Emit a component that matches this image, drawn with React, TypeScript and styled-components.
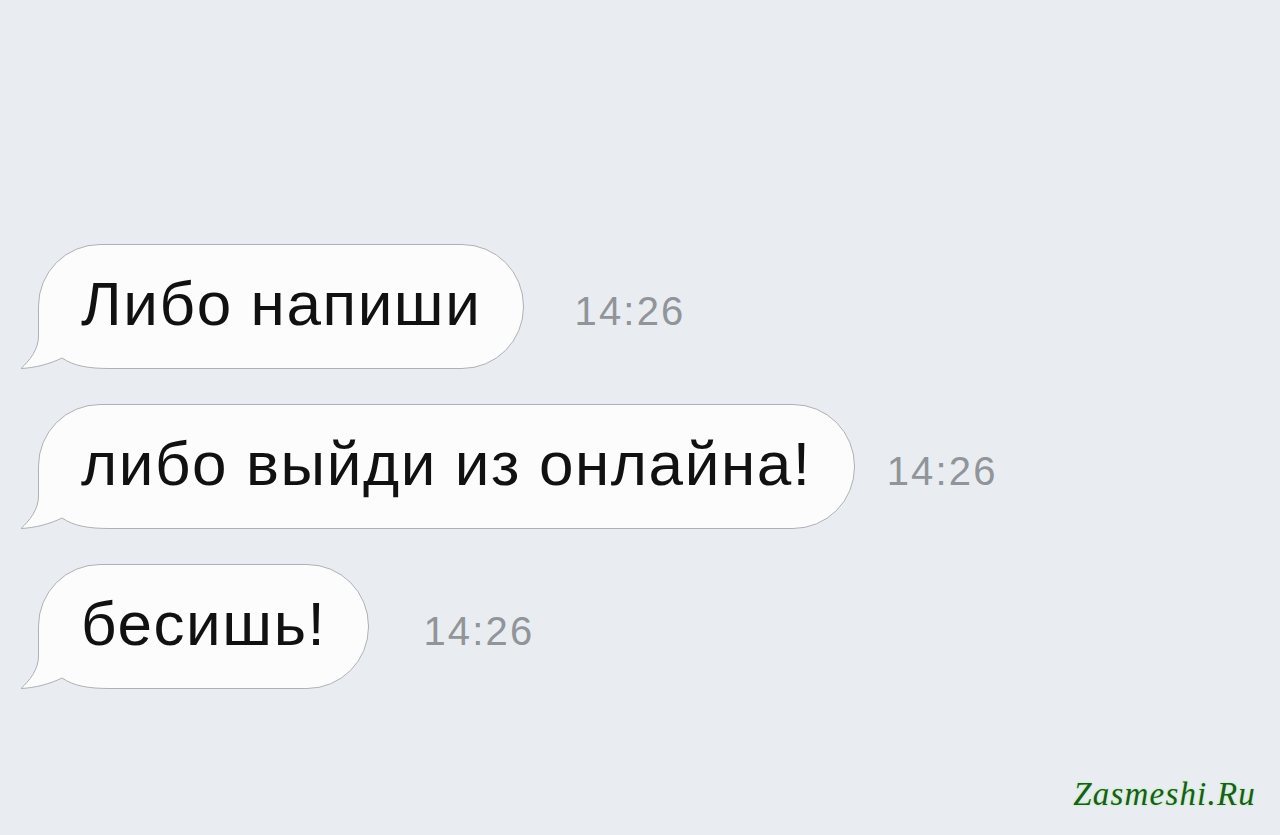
import React from "react";
import styled, { createGlobalStyle } from "styled-components";

const BG = "#e9edf2";
const BORDER = "#aeb0b3";
const FILL = "#fcfcfc";

const Global = createGlobalStyle`
  html, body { margin: 0; padding: 0; background: ${BG}; }
  body { font-family: "Liberation Sans", Arial, sans-serif; }
`;

const Page = styled.div`
  width: 1280px;
  height: 835px;
  box-sizing: border-box;
  padding: 244px 24px 22px 38px;
  display: flex;
  flex-direction: column;
  overflow: hidden;
`;

const Thread = styled.div`
  display: flex;
  flex-direction: column;
  gap: 35px;
`;

const Row = styled.div<{ $gap: number }>`
  display: flex;
  align-items: center;
  gap: ${(p) => p.$gap}px;
`;

const Bubble = styled.div`
  position: relative;
  box-sizing: border-box;
  height: 125px;
  padding: 0 42px 6px 42px;
  display: flex;
  align-items: center;
  background: ${FILL};
  border: 1px solid ${BORDER};
  border-radius: 62px 62px 62px 0;
`;

const Tail = styled.svg`
  position: absolute;
  left: -21px;
  bottom: -2px;
  width: 92px;
  height: 72px;
  display: block;
`;

const Text = styled.span`
  position: relative;
  font-size: 62px;
  letter-spacing: 1.6px;
  word-spacing: -1px;
  color: #111;
  white-space: nowrap;
  line-height: 1;
`;

const Time = styled.span`
  margin-top: 9px;
  font-size: 40px;
  letter-spacing: 2.2px;
  color: #919499;
  line-height: 1;
`;

const Watermark = styled.div`
  margin-top: auto;
  align-self: flex-end;
  font-family: "Liberation Serif", "DejaVu Serif", serif;
  font-style: italic;
  font-size: 33px;
  letter-spacing: 1.2px;
  color: #1d5a22;
  text-shadow: 0 0 3px #b8f0b0, 0 0 2px #c8f5c0;
`;

const BubbleTail = () => (
  <Tail viewBox="0 0 92 72">
    <rect x="0" y="28" width="92" height="44" fill={BG} />
    <path
      d="M20.5 28 L20.5 38 C20.5 52 11 63 3 70.5 C 16 70 32 66 44 60 C 56 68 70 70.5 92 70.5 L92 28 Z"
      fill={FILL}
    />
    <path
      d="M20.5 28 L20.5 38 C20.5 52 11 63 3 70.5 C 16 70 32 66 44 60 C 56 68 70 70.5 92 70.5"
      fill="none"
      stroke={BORDER}
      strokeWidth="1"
    />
  </Tail>
);

const messages = [
  { text: "Либо напиши", time: "14:26", gap: 50 },
  { text: "либо выйди из онлайна!", time: "14:26", gap: 32 },
  { text: "бесишь!", time: "14:26", gap: 54 },
];

export default function App() {
  return (
    <>
      <Global />
      <Page>
        <Thread>
          {messages.map((m, i) => (
            <Row key={i} $gap={m.gap}>
              <Bubble>
                <BubbleTail />
                <Text>{m.text}</Text>
              </Bubble>
              <Time>{m.time}</Time>
            </Row>
          ))}
        </Thread>
        <Watermark>Zasmeshi.Ru</Watermark>
      </Page>
    </>
  );
}
